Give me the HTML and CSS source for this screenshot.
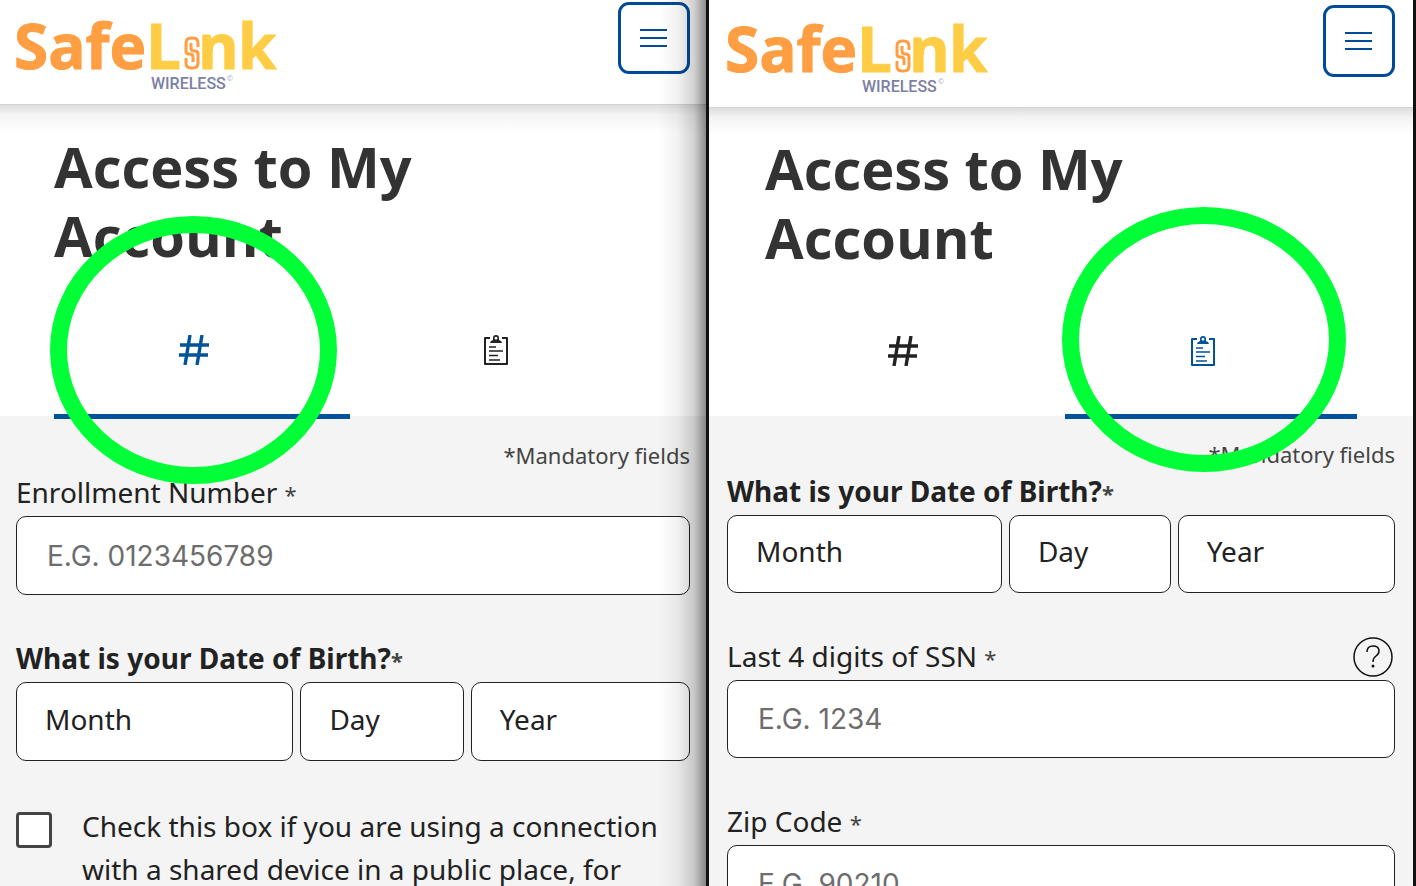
FILE: index.html
```html
<!DOCTYPE html>
<html lang="en">
<head>
    <meta charset="UTF-8">
    <meta name="viewport" content="width=device-width, initial-scale=1.0">
    <title>SafeLink Wireless - Access to My Account</title>
    <link rel="stylesheet" href="styles.css">
</head>
<body>
    <!-- Shared icons -->
    <svg class="sprite" aria-hidden="true">
        <symbol id="logo" viewBox="0 0 264 92" overflow="visible">
            <g class="logo-word">
                <text class="logo-safe" x="-2" y="67">Safe</text>
                <text class="logo-link" x="130" y="67">L</text>
                <text class="logo-link" x="182" y="67">n</text>
                <text class="logo-link" x="222" y="67">k</text>
            </g>
            <g fill="none" stroke="#ff9e42" stroke-width="3" stroke-linejoin="round">
                <path d="M182 45v-4q0-5-5-5h-2q-5 0-5 5v8q0 3 3 3h1q3 0 3 3v5"/>
                <path d="M170 56v5q0 5 5 5h2q5 0 5-5v-9q0-3-3-3h-1q-3 0-3-3v-5"/>
            </g>
            <text class="logo-sub" x="135" y="87">WIRELESS</text>
            <text class="logo-mark" x="211" y="79">©</text>
        </symbol>
        <symbol id="menu" viewBox="0 0 28 20">
            <path d="M0 2h27M0 10h27M0 18h27" stroke="#004a99" stroke-width="2"/>
        </symbol>
        <symbol id="hash" viewBox="0 0 30 30">
            <path d="M11 0 6 30M23 0l-5 30M1 10h29M0 20h29" fill="none" stroke="currentColor" stroke-width="3.400"/>
        </symbol>
        <symbol id="clipboard" viewBox="0 0 24 30">
            <path d="M6 3H1v26h22V3h-5" fill="none" stroke="currentColor" stroke-width="2" stroke-linejoin="round"/>
            <path fill-rule="evenodd" fill="currentColor" d="M6 8q0-2 3-3V3q0-3 3-3t3 3v2q3 1 3 3zM12 1.800a1.400 1.400 0 1 0 .01 0z"/>
            <path d="M5 12h7M5 16h14M5 20.500h9M5 25h11" stroke="currentColor" stroke-width="1.700"/>
        </symbol>
    </svg>

    <!-- Enrollment number -->
    <section class="screen screen-enrollment">
        <header>
            <a href="#" class="logo" aria-label="SafeLink Wireless"><svg><use href="#logo"/></svg></a>
            <button class="menu-button" aria-label="Menu"><svg><use href="#menu"/></svg></button>
        </header>
        <div class="intro">
            <h1>Access to My<br>Account</h1>
            <nav class="tabs">
                <a href="#" class="tab active" aria-label="Enrollment number"><svg class="hash"><use href="#hash"/></svg></a>
                <a href="#" class="tab" aria-label="Personal information"><svg class="clipboard"><use href="#clipboard"/></svg></a>
            </nav>
        </div>
        <form>
            <p class="mandatory">*Mandatory fields</p>
            <div class="field">
                <label for="enrollment">Enrollment Number <span>*</span></label>
                <input type="text" id="enrollment" placeholder="E.G. 0123456789">
            </div>
            <fieldset class="field">
                <legend>What is your Date of Birth?<span>*</span></legend>
                <div class="date">
                    <select aria-label="Month"><option>Month</option></select>
                    <select aria-label="Day"><option>Day</option></select>
                    <select aria-label="Year"><option>Year</option></select>
                </div>
            </fieldset>
            <div class="check">
                <input type="checkbox" id="shared">
                <label for="shared">Check this box if you are using a connection with a shared device in a public place, for</label>
            </div>
        </form>
        <div class="ring"></div>
    </section>

    <!-- Personal information -->
    <section class="screen screen-personal">
        <header>
            <a href="#" class="logo" aria-label="SafeLink Wireless"><svg><use href="#logo"/></svg></a>
            <button class="menu-button" aria-label="Menu"><svg><use href="#menu"/></svg></button>
        </header>
        <div class="intro">
            <h1>Access to My<br>Account</h1>
            <nav class="tabs">
                <a href="#" class="tab" aria-label="Enrollment number"><svg class="hash"><use href="#hash"/></svg></a>
                <a href="#" class="tab active" aria-label="Personal information"><svg class="clipboard"><use href="#clipboard"/></svg></a>
            </nav>
        </div>
        <form>
            <p class="mandatory">*Mandatory fields</p>
            <fieldset class="field">
                <legend>What is your Date of Birth?<span>*</span></legend>
                <div class="date">
                    <select aria-label="Month"><option>Month</option></select>
                    <select aria-label="Day"><option>Day</option></select>
                    <select aria-label="Year"><option>Year</option></select>
                </div>
            </fieldset>
            <div class="field">
                <div class="label-row">
                    <label for="ssn">Last 4 digits of SSN <span>*</span></label>
                    <button type="button" class="help" aria-label="Help">
                        <svg viewBox="0 0 40 40" fill="none" stroke="#111" stroke-width="1.500">
                            <circle cx="20" cy="20" r="19"/>
                            <path d="M14 15q0-6 6-6t6 5q0 3-3 5t-3 6"/>
                            <circle cx="20" cy="29" r="1.500" fill="#111" stroke="none"/>
                        </svg>
                    </button>
                </div>
                <input type="text" id="ssn" placeholder="E.G. 1234">
            </div>
            <div class="field">
                <label for="zip">Zip Code <span>*</span></label>
                <input type="text" id="zip" placeholder="E.G. 90210">
            </div>
        </form>
        <div class="ring"></div>
    </section>
</body>
</html>
```
FILE: styles.css
```css
/* Reset */
* {
    margin: 0;
    padding: 0;
    box-sizing: border-box;
}

body {
    display: grid;
    grid-template-columns: 706fr 704fr;
    gap: 3px;
    height: 100vh;
    padding-right: 3px;
    background-color: #111;
    color: #222;
    font-family: "Noto Sans", "Open Sans", sans-serif;
    font-size: 28px;
    overflow: hidden;
}

.sprite {
    position: absolute;
    width: 0;
    height: 0;
}

.screen {
    position: relative;
    background-color: #f4f4f4;
    overflow: hidden;
}

/* Header */
header {
    display: flex;
    justify-content: space-between;
    align-items: flex-start;
    height: 105px;
    padding: 2px 16px 0;
    background-color: #fff;
    border-bottom: 1px solid #d4d4d4;
}

.logo svg {
    display: block;
    width: 264px;
    height: 92px;
    overflow: visible;
}

.logo-word {
    font-family: "Open Sans", sans-serif;
    font-size: 62px;
    font-weight: 700;
    stroke-width: 1px;
}

.logo-safe {
    fill: #ff9e42;
    stroke: #ff9e42;
}

.logo-link {
    fill: #ffcd45;
    stroke: #ffcd45;
}

.logo-sub {
    font: 500 16px Roboto, sans-serif;
    fill: #7c80a3;
}

.logo-mark {
    font-size: 7px;
    fill: #a5a8c0;
}

.menu-button {
    display: grid;
    place-items: center;
    width: 72px;
    height: 72px;
    background-color: transparent;
    border: 3px solid #004a99;
    border-radius: 11px;
}

.menu-button svg {
    width: 28px;
    height: 20px;
}

/* Title and tabs */
.intro {
    height: 311px;
    padding: 27px 54px 0;
    background: linear-gradient(#dedede, #f4f4f4 10px, #fff 28px);
}

h1 {
    color: #333;
    font-family: "Open Sans", sans-serif;
    font-size: 56px;
    line-height: 69px;
}

.tabs {
    display: grid;
    grid-template-columns: 1fr 1fr;
    gap: 7px;
    height: 149px;
}

.tab {
    display: grid;
    place-items: center;
    padding: 16px 16px 0 0;
    border-bottom: 5px solid transparent;
    color: #222;
}

.tab.active {
    border-color: #00539b;
    color: #00539b;
}

.hash {
    width: 30px;
    height: 30px;
}

.clipboard {
    width: 24px;
    height: 30px;
}

/* Form */
form {
    padding: 23px 16px 0;
}

.mandatory {
    margin-bottom: 2px;
    color: #444;
    font-size: 22px;
    line-height: 32px;
    text-align: right;
}

.field {
    margin-bottom: 44px;
    border: none;
}

label,
legend {
    display: block;
    height: 43px;
    line-height: 38px;
}

legend {
    font-weight: 700;
}

.field span {
    color: #444;
    font-size: 22px;
}

.field input,
.date select {
    display: block;
    width: 100%;
    height: 79px;
    padding: 0 30px;
    background-color: #fff;
    border: 1px solid #222;
    border-radius: 10px;
    font-family: Inter, sans-serif;
    font-size: 28px;
}

.field input::placeholder {
    color: #6d6d6d;
}

.date {
    display: grid;
    grid-template-columns: 277fr 163fr 219fr;
    gap: 7px;
}

.date select {
    padding: 0 28px 6px;
    appearance: none;
    color: #222;
    font-family: inherit;
}

.label-row {
    display: flex;
    justify-content: space-between;
    align-items: flex-start;
}

.help {
    width: 40px;
    height: 40px;
    margin-right: 2px;
    background: none;
    border: none;
}

.help svg {
    display: block;
}

.check {
    display: flex;
    align-items: flex-start;
    gap: 30px;
}

.check input {
    flex: none;
    width: 36px;
    height: 36px;
    margin-top: 7px;
    appearance: none;
    background-color: #fff;
    border: 3px solid #444;
    border-radius: 4px;
}

.check label {
    height: auto;
    line-height: 43px;
}

/* Green marker rings */
.ring {
    position: absolute;
    top: 216px;
    left: 50px;
    width: 287px;
    height: 268px;
    border: 17px solid #00ff37;
    border-radius: 50%;
}

/* Shade along the inner edge of the first screen */
.screen-enrollment::after {
    content: "";
    position: absolute;
    inset: 0 0 0 auto;
    width: 48px;
    background: linear-gradient(to right, rgba(0, 0, 0, 0), rgba(0, 0, 0, 0.05) 40%, rgba(0, 0, 0, 0.18) 75%, rgba(0, 0, 0, 0.45));
    pointer-events: none;
}

/* Second screen */
.screen-personal header {
    height: 108px;
    padding: 5px 18px 0;
}

.screen-personal .intro {
    height: 308px;
    padding: 26px 56px 0;
}

.screen-personal .tabs {
    height: 147px;
}

.screen-personal form {
    padding: 22px 18px 0;
}

.screen-personal .field {
    margin-bottom: 44px;
}

.screen-personal .field input,
.screen-personal .date select {
    height: 78px;
}

.screen-personal .ring {
    top: 207px;
    left: 353px;
    width: 284px;
    height: 265px;
}
```
